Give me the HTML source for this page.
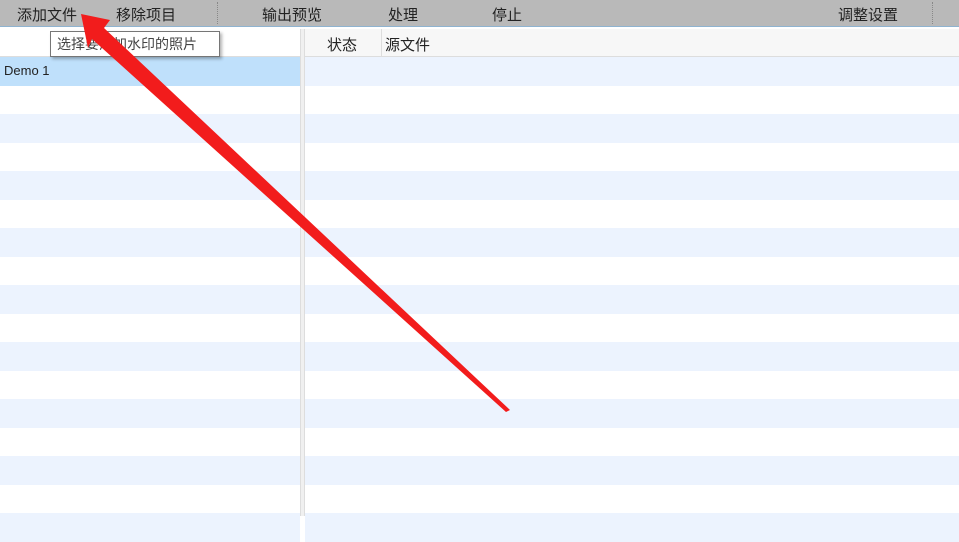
<!DOCTYPE html><html><head><meta charset="utf-8"><style>
body{margin:0;width:959px;height:516px;overflow:hidden;background:#fff;font-family:"Liberation Sans","Noto Sans CJK SC",sans-serif;font-size:15px;color:#222;position:relative}
.tb{position:absolute;left:0;top:0;width:959px;height:26px;background:#b9b9b9;border-bottom:1px solid #8fb3d0}
.tb span{position:absolute;top:4px;font-size:15px;color:#222}
.sep{position:absolute;top:2px;width:0;height:22px;border-left:1px dotted #888}
.lp{position:absolute;left:0;top:29px;width:300px;height:487px}
.rp{position:absolute;left:305px;top:29px;width:654px;height:487px}
.split{position:absolute;left:300px;top:29px;width:5px;height:487px;background:#f0f0f0;border-left:1px solid #ddd;border-right:1px solid #ddd;box-sizing:border-box}
.hdr{height:28px;border-bottom:1px solid #ddd;box-sizing:border-box}
.row{height:28.5px}
.b{background:#ecf3fe}
</style></head><body>
<div class="tb">
<span style="left:17px">添加文件</span><span style="left:116px">移除项目</span>
<div class="sep" style="left:217px"></div>
<span style="left:262px">输出预览</span><span style="left:388px">处理</span><span style="left:492px">停止</span>
<span style="left:838px">调整设置</span>
<div class="sep" style="left:932px"></div>
</div>
<div class="lp">
<div class="hdr" style="background:#fff"></div>
<div class="row" style="background:#bfe0fb;font-size:13px;line-height:28px;padding-left:4px">Demo 1</div>
<div class="row"></div><div class="row b"></div><div class="row"></div><div class="row b"></div><div class="row"></div><div class="row b"></div><div class="row"></div><div class="row b"></div><div class="row"></div><div class="row b"></div><div class="row"></div><div class="row b"></div><div class="row"></div><div class="row b"></div><div class="row"></div><div class="row b"></div>
</div>
<div class="split"></div>
<div class="rp">
<div class="hdr" style="background:#f7f7f7;position:relative"><span style="position:absolute;left:22px;top:5px">状态</span><div style="position:absolute;left:76px;top:0;height:28px;border-left:1px solid #ddd"></div><span style="position:absolute;left:80px;top:5px">源文件</span></div>
<div class="row b"></div><div class="row"></div><div class="row b"></div><div class="row"></div><div class="row b"></div><div class="row"></div><div class="row b"></div><div class="row"></div><div class="row b"></div><div class="row"></div><div class="row b"></div><div class="row"></div><div class="row b"></div><div class="row"></div><div class="row b"></div><div class="row"></div><div class="row b"></div>
</div>
<div style="position:absolute;left:50px;top:31px;width:170px;height:26px;background:#fff;border:1px solid #767676;box-shadow:2px 2px 3px rgba(0,0,0,.3);box-sizing:border-box;font-size:14px;line-height:24px;padding-left:6px;color:#444">选择要添加水印的照片</div>
<svg style="position:absolute;left:0;top:0" width="959" height="516"><polygon points="81,14 110,20 104,28 510,410 506,412 92,39 88,48" fill="#f21c1c"/></svg>
</body></html>
